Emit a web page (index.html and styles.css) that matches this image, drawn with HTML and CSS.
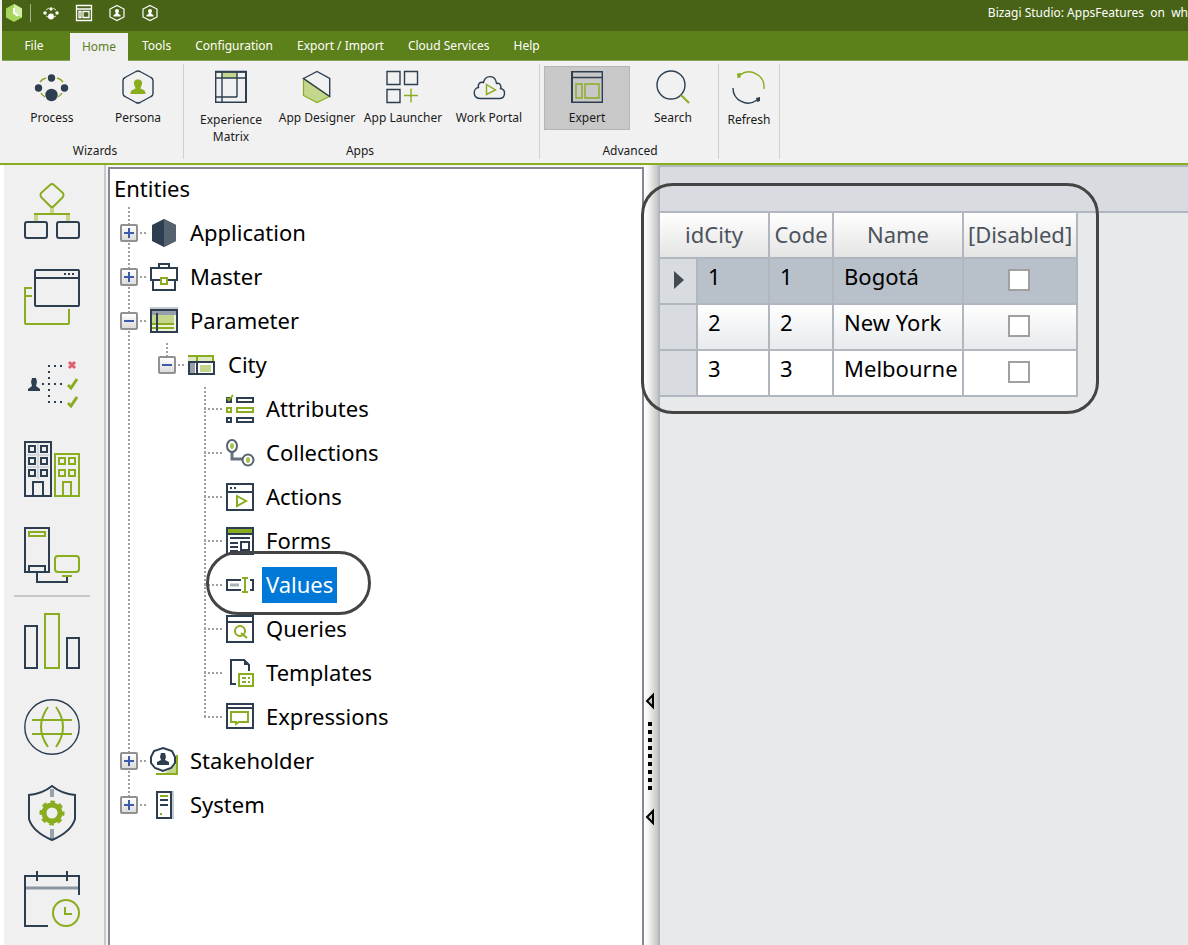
FILE: index.html
```html
<!DOCTYPE html>
<html lang="en">
<head>
<meta charset="utf-8">
<title>Bizagi Studio: AppsFeatures</title>
<link rel="stylesheet" href="styles.css">
</head>
<body>
<div class="app">
  <header class="titlebar">
    <div class="quick">
      <svg class="logo" viewBox="0 0 16 18"><path d="M8 0l8 4.500v9L8 18l-8-4.500v-9z" fill="#a5d65a"/><path d="M8 0l8 4.500v9L8 9z" fill="#d3edaa"/><path d="M8 4v5l4 3" fill="none" stroke="#fff" stroke-width="2"/></svg>
      <span class="quick-sep"></span>
      <button class="quick-btn" aria-label="Process"><svg viewBox="0 0 16 16" fill="#fff"><circle cx="8" cy="4" r="1.700"/><circle cx="2" cy="8" r="1.700"/><circle cx="14" cy="8" r="1.700"/><circle cx="8" cy="11.500" r="3"/><path d="M3 5l3-2M10 3l3 2M3 11l2 1M13 11l-2 1" stroke="#dde8c5"/></svg></button>
      <button class="quick-btn" aria-label="Expert"><svg viewBox="0 0 16 16" fill="none" stroke="#fff"><path d="M.5.500h15v15H.5zM.5 4h15M3 6.500h2v6H3zM7 6.500h6v6H7z" stroke-width="1.300"/></svg></button>
      <button class="quick-btn" aria-label="Persona"><svg viewBox="0 0 16 16"><path d="M8 .5l7 3.500v8l-7 3.500L1 12V4z" fill="none" stroke="#fff" stroke-width="1.200"/><circle cx="8" cy="6" r="2" fill="#fff"/><path d="M7 7h2l.5 2 2 1v1.500h-7V10l2-1z" fill="#fff"/></svg></button>
      <button class="quick-btn" aria-label="Stakeholder"><svg viewBox="0 0 16 16"><path d="M8 .5l7 3.500v8l-7 3.500L1 12V4z" fill="none" stroke="#fff" stroke-width="1.200"/><circle cx="8" cy="6" r="2" fill="#fff"/><path d="M7 7h2l.5 2 2 1v1.500h-7V10l2-1z" fill="#fff"/></svg></button>
    </div>
    <div class="title">Bizagi Studio: AppsFeatures&nbsp; on&nbsp; wh</div>
  </header>

  <nav class="menu">
    <button class="menu-item file">File</button>
    <button class="menu-item active">Home</button>
    <button class="menu-item">Tools</button>
    <button class="menu-item">Configuration</button>
    <button class="menu-item">Export / Import</button>
    <button class="menu-item">Cloud Services</button>
    <button class="menu-item">Help</button>
  </nav>

  <div class="ribbon">
    <section class="group wizards">
      <div class="group-items">
        <button class="tool"><svg class="tool-icon" viewBox="0 0 32 32"><path d="M4 11q2-3 6-4M21 7q4 1 6 4M5 22q1 2 4 4M26 22q-1 2-4 4" class="g"/><g fill="#2c3e50"><circle cx="15.500" cy="7" r="3.700"/><circle cx="2.500" cy="17" r="3.700"/><circle cx="28.500" cy="17" r="3.700"/><circle cx="15.500" cy="24" r="6.200"/></g></svg>Process</button>
        <button class="tool"><svg class="tool-icon" viewBox="0 0 32 32"><path d="M14 0.500q2-1 4 0l11 6q2 1 2 3v13q0 2-2 3l-11 6q-2 1-4 0l-11-6q-2-1-2-3v-13q0-2 2-3z" class="d"/><path d="M16 8.500c3 0 4.500 2 4 4.500-.3 2-1.500 3-1.500 4.500l4 2q1 1 1 3.500h-15q0-2.500 1-3.500l4-2c0-1.500-1.200-2.500-1.500-4.500-.5-2.500 1-4.500 4-4.500z" fill="#8aac1f"/></svg>Persona</button>
      </div>
      <h2 class="group-name">Wizards</h2>
    </section>
    <section class="group apps">
      <div class="group-items">
        <button class="tool low"><svg class="tool-icon" viewBox="0 0 32 32"><path d="M7 1h15v6H7z" fill="#c3d68b"/><path d="M.7.700h30.600v30.600H.7zM.7 7h30M7 .7v30.600M22 .7V26M.7 26H22" class="d"/><path d="M0 .7h32M31 0v32" class="d thick"/></svg>Experience Matrix</button>
        <button class="tool"><svg class="tool-icon" viewBox="0 0 32 32"><path d="M2.500 7.500l26 18L16 31.500l-13.500-7z" fill="#c3d68b" stroke="#8aac1f" stroke-width="1.200"/><path d="M2.500 7.500L16 .5l12.700 7v18z" class="d"/></svg>App Designer</button>
        <button class="tool"><svg class="tool-icon" viewBox="0 0 32 32"><path d="M0 .5h13v13H0zM17.500.500h13v13h-13zM0 18.500h13v13H0z" class="d"/><path d="M24 17.500v14M17 24.500h14" class="g"/></svg>App Launcher</button>
        <button class="tool"><svg class="tool-icon" viewBox="0 0 32 32"><path d="M7.500 27.500c-8 0-8-10-2-11-1-4 2-6 5-5 2-8 12-8 13 1 4-1 5 3 4 5 6 1 5 10-1 10z" class="d"/><path d="M13.500 13.500l9 5.500-9 4.500z" class="g"/></svg>Work Portal</button>
      </div>
      <h2 class="group-name">Apps</h2>
    </section>
    <section class="group advanced">
      <div class="group-items">
        <button class="tool selected"><svg class="tool-icon" viewBox="0 0 32 32"><path d="M.7.700h30.600v30.600H.7zM.7 6.500h30.600" class="d"/><path d="M1 0v32" class="d thick"/><path d="M5 13h6v14H5zM14 13h14v14H14z" class="g"/></svg>Expert</button>
        <button class="tool"><svg class="tool-icon" viewBox="0 0 32 32"><circle cx="14" cy="14" r="14" class="d"/><path d="M24 24l8 8" class="g thick"/></svg>Search</button>
      </div>
      <h2 class="group-name">Advanced</h2>
    </section>
    <section class="group refresh">
      <button class="tool low narrow"><svg class="tool-icon" viewBox="0 0 32 32"><path d="M7 4A15 15 0 0 1 31 17v1" class="g"/><path d="M0 17A15 15 0 0 0 24 29" class="d"/><path d="M4 2.500l4-.500-.5 4.500-3 .5z" fill="#8aac1f"/><path d="M23 27l4-1v4l-3 1z" fill="#2c3e50"/></svg>Refresh</button>
    </section>
  </div>

  <main class="workspace">
    <aside class="modules">
      <div class="module-set">
        <button class="module" aria-label="Processes"><svg viewBox="0 0 56 56"><path d="M28 24v7M12 31v7M44 31v7" stroke="#c3d68b" stroke-width="4"/><path d="M26 2l-9 8q-1 2 0 4l9 9q2 2 4 0l9-9q1-2 0-4l-9-8q-2-2-4 0zM10 31h36" class="g2"/><rect x="1" y="39" width="22" height="16" rx="2" class="d2"/><rect x="33" y="39" width="22" height="16" rx="2" class="d2"/></svg></button>
        <button class="module" aria-label="Forms"><svg viewBox="0 0 56 56"><rect x="11" y="1" width="44" height="36" rx="1" class="d2"/><path d="M11 9h44" class="d2"/><path d="M40 5h11" class="d2" stroke-dasharray="2 2"/><path d="M8 19H1v35q0 1 1 1h42q1 0 1-1V40M1 27h7" class="g2"/></svg></button>
        <button class="module" aria-label="Policies"><svg viewBox="0 0 56 56"><path d="M25 10v38" class="d2" stroke-dasharray="2 4"/><path d="M30 11h10M18 29h22M30 47h10" class="d2" stroke-dasharray="2 4"/><path d="M8 23h4l1 4-1 4 4 3v2H4v-2l4-3-1-4z" fill="#2c3e50"/><path d="M45 7l6 6M51 7l-6 6" stroke="#e0606e" stroke-width="3"/><path d="M44 30l3 3 6-9M44 48l3 3 6-9" class="g3"/></svg></button>
        <button class="module" aria-label="Organization"><svg viewBox="0 0 56 56"><path d="M14 2v36M3 14h22M3 26h22" stroke="#d3d7db" stroke-width="2"/><path d="M1 1h26v54H1zM5 5h6v6H5zM17 5h6v6h-6zM5 17h6v6H5zM17 17h6v6h-6zM5 29h6v6H5zM17 29h6v6h-6zM9 55V41h10v14" class="d2"/><path d="M31 13h24v42H31zM35 17h6v6h-6zM45 17h6v6h-6zM35 29h6v6h-6zM45 29h6v6h-6zM39 55V41h8v14" class="g2"/></svg></button>
        <button class="module" aria-label="Systems"><svg viewBox="0 0 56 56"><path d="M1 1h24v44H1zM5 45v-6h16v6M13 46v9h30v-5" class="d2"/><path d="M5 5h16v4H5zM38 49h10" class="g2"/><rect x="31" y="29" width="24" height="16" rx="3" class="g2"/></svg></button>
      </div>
      <hr class="module-sep">
      <div class="module-set">
        <button class="module" aria-label="Reports"><svg viewBox="0 0 56 56"><path d="M1 13h12v42H1zM43 25h12v30H43z" class="d2"/><path d="M21 1h14v54H21z" class="g2"/></svg></button>
        <button class="module" aria-label="Localization"><svg viewBox="0 0 56 56"><circle cx="28" cy="28" r="27.200" class="d"/><path d="M8 21h40M8 35h40M24 8q-14 20 0 40M32 8q14 20 0 40" class="g2"/></svg></button>
        <button class="module" aria-label="Security"><svg viewBox="0 0 56 56"><path d="M28 4v8M28 44v10" stroke="#9aa3ac" stroke-width="4"/><path d="M28 1q-10 8-23 9v24q4 13 23 21 19-8 23-21V10Q38 9 28 1z" class="d bold"/><circle cx="28" cy="28" r="8" fill="none" stroke="#8aac1f" stroke-width="5"/><circle cx="28" cy="28" r="11" fill="none" stroke="#8aac1f" stroke-width="3" stroke-dasharray="4.640 4" stroke-dashoffset="2"/></svg></button>
        <button class="module" aria-label="Calendar"><svg viewBox="0 0 56 56"><path d="M2 17h53" stroke="#8995a0" stroke-width="3"/><path d="M24 55H1V5h54v19M13 0v10M43 0v10" class="d2"/><circle cx="42" cy="42" r="13" class="g2"/><path d="M41 36v7h7" class="g2"/></svg></button>
      </div>
    </aside>

    <section class="tree-pane">
      <h1 class="tree-title">Entities</h1>
      <ul class="tree root">
        <li><div class="node"><button class="expander plus" aria-label="Expand Application"></button><span class="link"></span><svg class="node-icon" viewBox="0 0 28 28"><path d="M14 0l12 6v16l-12 6-12-6V6z" fill="#2c3e50"/><path d="M14 0l12 6v16l-12 6z" fill="#56636f"/></svg><span class="label">Application</span></div></li>
        <li><div class="node"><button class="expander plus" aria-label="Expand Master"></button><span class="link"></span><svg class="node-icon" viewBox="0 0 28 28"><path d="M9 4V1h10v3M10 17H1V5h26v12h-9M3 18v9h22v-9" class="d2"/><path d="M11 15h6v6h-6z" class="g2"/></svg><span class="label">Master</span></div></li>
        <li><div class="node"><button class="expander" aria-label="Collapse Parameter"></button><span class="link"></span><svg class="node-icon" viewBox="0 0 28 28"><path d="M0 0h28v2H0z" fill="#c5cad0"/><path d="M1 3h26v22H1z" fill="#eef3df" stroke="#2c3e50" stroke-width="2"/><path d="M2 4h24v4H2z" fill="#97a0aa"/><path d="M2 8h22v10H2z" fill="#c3d68b"/><path d="M2 17h22M2 21h22" class="g2"/><path d="M7 6v19" class="d2"/></svg><span class="label">Parameter</span></div>
          <ul class="tree">
            <li><div class="node"><button class="expander" aria-label="Collapse City"></button><span class="link"></span><svg class="node-icon" viewBox="0 0 28 28"><path d="M0 4h26v6H0z" fill="#dfe9c2"/><path d="M0 5h26M9 4v7M25 5v6" class="g2"/><path d="M1 11h25v12H1z" fill="#fff" stroke="#2c3e50" stroke-width="2"/><path d="M2 12h5v10H2z" fill="#97a0aa"/><path d="M12 14h11v7H12z" fill="#c3d68b"/><path d="M9 11v12" class="d2"/></svg><span class="label">City</span></div>
              <ul class="tree leaves">
                <li><div class="node"><span class="link"></span><svg class="node-icon" viewBox="0 0 28 28"><path d="M1 3h4v4H1zM11 3h16v4H11zM1 23h4v4H1zM11 23h16v4H11z" class="d2"/><path d="M1 13h4v4H1zM11 13h16v4H11zM1 3l2 2 4-5" class="g2"/></svg><span class="label">Attributes</span></div></li>
                <li><div class="node"><span class="link"></span><svg class="node-icon" viewBox="0 0 28 28"><path d="M6 13v7h10" fill="none" stroke="#66727f" stroke-width="3"/><ellipse cx="6" cy="7" rx="5" ry="6" fill="#fff" stroke="#56636f" stroke-width="2"/><circle cx="22" cy="21" r="5.500" fill="#fff" stroke="#56636f" stroke-width="2"/><ellipse cx="6" cy="7" rx="2" ry="3" fill="#a6c24f"/><ellipse cx="22" cy="21" rx="2" ry="3" fill="#a6c24f"/></svg><span class="label">Collections</span></div></li>
                <li><div class="node"><span class="link"></span><svg class="node-icon" viewBox="0 0 28 28"><path d="M1 1h26v26H1zM1 9h26" class="d2"/><path d="M4 5h6" class="d2" stroke-dasharray="2 2"/><path d="M11 13l9 5-9 5z" class="g2"/></svg><span class="label">Actions</span></div></li>
                <li><div class="node"><span class="link"></span><svg class="node-icon" viewBox="0 0 28 28"><path d="M2 2h24v5H2z" fill="#8aac1f"/><path d="M1 1h26v26H1zM1 7h26M4 11h20M4 16h8M4 20h8M4 24h8M15 15h8v8h-8z" class="d2"/></svg><span class="label">Forms</span></div></li>
                <li><div class="node"><span class="link"></span><svg class="node-icon" viewBox="0 0 28 28"><path d="M15 9H1v10h14M24 9h3v10h-3" class="d2"/><path d="M4 14h9" stroke="#a9b1b9" stroke-width="3"/><path d="M16 7h6M16 21h6M19 7v14" class="g2"/></svg><span class="label current">Values<span class="callout"></span></span></div></li>
                <li><div class="node"><span class="link"></span><svg class="node-icon" viewBox="0 0 28 28"><path d="M1 1h26v26H1zM1 7h26" class="d2"/><circle cx="14" cy="16" r="5" class="g2"/><path d="M15 18l6 5" class="g2"/></svg><span class="label">Queries</span></div></li>
                <li><div class="node"><span class="link"></span><svg class="node-icon" viewBox="0 0 28 28"><path d="M10 25H5V1h13l5 5v6" class="d2"/><path d="M18 0l6 6h-6z" fill="#2c3e50"/><path d="M13 15h14v12H13zM16 19h4M22 19h2M16 23h4M22 23h2" class="g2"/></svg><span class="label">Templates</span></div></li>
                <li><div class="node"><span class="link"></span><svg class="node-icon" viewBox="0 0 28 28"><path d="M1 1h26v24H1zM1 5h26" class="d2"/><path d="M5 9h17v10h-9l-3 2v-2H5z" class="g2"/></svg><span class="label">Expressions</span></div></li>
              </ul>
            </li>
          </ul>
        </li>
        <li><div class="node"><button class="expander plus" aria-label="Expand Stakeholder"></button><span class="link"></span><svg class="node-icon" viewBox="0 0 28 28"><path d="M27 8v19H6" class="g2"/><path d="M26 17v9H15z" fill="#c3d68b"/><path d="M13 1l9 3 3 6v6l-4 5-8 3-8-3-4-5v-6l3-6z" fill="#fff" stroke="#2c3e50" stroke-width="2"/><path d="M11 6h4l1 4-1 3 4 2v3H7v-3l4-2-1-3z" fill="#2c3e50"/></svg><span class="label">Stakeholder</span></div></li>
        <li><div class="node"><button class="expander plus" aria-label="Expand System"></button><span class="link"></span><svg class="node-icon" viewBox="0 0 28 28"><path d="M23 0v28" stroke="#c5cad0" stroke-width="2"/><path d="M7 1h14v26H7zM10 9h8M10 14h8" class="d2"/><path d="M10 5h8M10 23h2" class="g2"/></svg><span class="label">System</span></div></li>
      </ul>
    </section>

    <div class="splitter">
      <svg class="arrow" viewBox="0 0 8 14"><path d="M7 1v12L1 7z" fill="#ccc" stroke="#000" stroke-width="2"/></svg>
      <span class="grip"></span>
      <svg class="arrow" viewBox="0 0 8 14"><path d="M7 1v12L1 7z" fill="#ccc" stroke="#000" stroke-width="2"/></svg>
    </div>

    <section class="grid-pane">
      <div class="group-bar"></div>
      <div class="grid-wrap">
        <table class="grid">
          <colgroup><col class="c-mark"><col class="c-id"><col class="c-code"><col class="c-name"><col class="c-off"></colgroup>
          <thead><tr><th colspan="2">idCity</th><th>Code</th><th>Name</th><th>[Disabled]</th></tr></thead>
          <tbody>
            <tr class="picked"><td class="mark"><svg class="pointer" viewBox="0 0 10 18"><path d="M0 0v18l10-9z" fill="#434a54"/></svg></td><td>1</td><td>1</td><td>Bogotá</td><td class="check"><input type="checkbox" aria-label="Bogotá disabled"></td></tr>
            <tr class="shaded"><td class="mark"></td><td>2</td><td>2</td><td>New York</td><td class="check"><input type="checkbox" aria-label="New York disabled"></td></tr>
            <tr><td class="mark"></td><td>3</td><td>3</td><td>Melbourne</td><td class="check"><input type="checkbox" aria-label="Melbourne disabled"></td></tr>
          </tbody>
        </table>
        <span class="callout wide"></span>
      </div>
    </section>
  </main>
</div>
</body>
</html>
```
FILE: styles.css
```css
* { box-sizing: border-box; }
body { margin: 0; font-family: "Noto Sans", "Open Sans", sans-serif; font-size: 12px; color: #1a1a1a; background: #f0f0f0; }
button { font: inherit; color: inherit; background: none; border: 0; padding: 0; margin: 0; }
svg { display: block; overflow: visible; }
h1, h2 { margin: 0; font-weight: 400; }
.d, .d2, .g, .g2, .g3 { fill: none; }
.d, .d2 { stroke: #2c3e50; }
.g, .g2, .g3 { stroke: #8aac1f; }
.d, .g { stroke-width: 1.4; }
.d2, .g2, .thick, .bold { stroke-width: 2; }
.g3 { stroke-width: 3; }

.app { display: flex; flex-direction: column; height: 100vh; overflow: hidden; }

.titlebar { display: flex; justify-content: space-between; height: 31px; flex: none; margin-left: 2px; padding-left: 4px; background: #486316; color: #fff; overflow: hidden; }
.quick { display: flex; align-items: center; height: 26px; gap: 17px; }
.logo { width: 16px; height: 18px; }
.quick-sep { width: 1px; height: 18px; margin: 0 -5px 0 -9px; background: #a3b188; }
.quick-btn { width: 16px; height: 16px; }
.title { line-height: 26px; white-space: nowrap; }

.menu { display: flex; height: 30px; flex: none; margin-left: 2px; background: #5c801a; border-bottom: 1px solid #8aa35b; color: #fff; }
.menu-item { padding: 0 12px; line-height: 30px; white-space: nowrap; }
.menu-item.file { width: 64px; margin-right: 4px; }
.menu-item.active { width: 58px; height: 28px; line-height: 26px; margin: 2px 2px 0 0; padding: 0; background: #f0f0f0; color: #5c801a; }

.ribbon { display: flex; height: 104px; flex: none; padding: 3px 0 4px; background: #f1f1f1; border-bottom: 2px solid #8aac1f; }
.group { display: flex; flex-direction: column; justify-content: space-between; padding-top: 2px; border-right: 1px solid #d0d0d0; }
.wizards { padding-left: 9px; padding-right: 2px; }
.apps { padding-left: 4px; padding-right: 7px; }
.advanced { padding-left: 4px; padding-right: 2px; }
.group-items { display: flex; align-items: flex-start; }
.group-name { font-size: 12px; line-height: 16px; text-align: center; }
.tool { display: flex; flex-direction: column; align-items: center; gap: 6px; width: 86px; height: 64px; padding-top: 4px; border: 1px solid transparent; line-height: 17px; text-align: center; white-space: nowrap; }
.tool.low { height: 76px; gap: 8px; white-space: normal; }
.tool.narrow { width: 60px; }
.tool.selected { background: #c8c8c8; border-color: #b4b4b4; }
.tool-icon { width: 32px; height: 32px; flex: none; }

.workspace { display: flex; flex: 1; min-height: 0; background: #f4f4f4; }
.modules { width: 106px; flex: none; padding: 18px 14px 0 10px; border-left: 4px solid #fff; border-right: 2px solid #c8c8c8; background: #f0f0f0; }
.module-set { display: flex; flex-direction: column; align-items: center; gap: 30px; }
.module { width: 56px; height: 56px; flex: none; }
.module svg { width: 56px; height: 56px; }
.module-sep { height: 2px; margin: 12px 0 16px; border: 0; background: #c8c8c8; }

.tree-pane { flex: 0 1 536px; min-width: 300px; margin: 2px 0 0 2px; padding-left: 4px; border: 2px solid #838991; border-bottom: 0; background: #fff; font-size: 22px; color: #000; overflow: hidden; }
.tree-title { height: 38px; font-size: 22px; line-height: 38px; }
.tree { list-style: none; margin: 0; padding: 0 0 0 38px; }
.tree.root { padding: 4px 0 0 6px; background: repeating-linear-gradient(#a0a0a0 0 2px, transparent 2px 4px) 14px 0 / 2px 4px no-repeat; }
.tree li { background: repeating-linear-gradient(#a0a0a0 0 2px, transparent 2px 4px) 8px 0 / 2px 100% no-repeat; }
.tree li:last-child { background-size: 2px 22px; }
.node { display: flex; align-items: center; height: 44px; }
.expander { width: 18px; height: 18px; flex: none; border: 2px solid #919191; border-radius: 2px; background: linear-gradient(#3c5aa8, #3c5aa8) center / 10px 2px no-repeat, linear-gradient(#fff, #dcdcdc); }
.expander.plus { background: linear-gradient(#3c5aa8, #3c5aa8) center / 10px 2px no-repeat, linear-gradient(#3c5aa8, #3c5aa8) center / 2px 10px no-repeat, linear-gradient(#fff, #dcdcdc); }
.link { width: 8px; height: 2px; margin: 0 2px; background: repeating-linear-gradient(90deg, #a0a0a0 0 2px, transparent 2px 4px); }
.leaves .link { width: 18px; margin: 0 4px 0 8px; }
.node-icon { width: 28px; height: 28px; flex: none; margin-right: 8px; }
.label { height: 36px; padding: 0 4px; line-height: 34px; }
.label.current { position: relative; background: #0078d7; color: #fff; }
.callout { position: absolute; inset: -16px -34px -12px -56px; border: 3px solid #444; border-radius: 32px; pointer-events: none; }
.callout.wide { inset: -30px -21px -17px -19px; }

.splitter { display: flex; flex-direction: column; align-items: center; width: 14px; flex: none; padding: 0 2px 3px 0; background: linear-gradient(90deg, #fff, #f4f4f4 30%, #c4c4c4); }
.splitter::before { content: ""; flex: 9; }
.splitter::after { content: ""; flex: 2; }
.arrow { width: 8px; height: 14px; }
.grip { width: 4px; height: 68px; margin: 14px 0 20px; background: repeating-linear-gradient(#000 0 4px, transparent 4px 8px); }

.grid-pane { flex: 1; min-width: 0; border-left: 2px solid #b0b7bf; border-top: 2px solid #b0b7bf; background: #e8e9eb; }
.group-bar { height: 46px; background: #d8dbe0; border-bottom: 2px solid #b0b7bf; }
.grid-wrap { position: relative; width: max-content; }
.grid { width: 418px; table-layout: fixed; border-collapse: separate; border-spacing: 0; font-size: 22px; color: #000; }
.c-mark { width: 38px; }
.c-id { width: 72px; }
.c-code { width: 64px; }
.c-name { width: 130px; }
.c-off { width: 114px; }
.grid th, .grid td { height: 46px; padding: 0 0 10px 10px; border-right: 2px solid #b0b7bf; border-bottom: 2px solid #b0b7bf; line-height: 30px; text-align: left; font-weight: 400; white-space: nowrap; background: #fff; }
.grid th { padding: 0 0 2px; text-align: center; color: #4c535c; background: linear-gradient(#fff, #e4e4e4); }
.grid .picked td { background: #b8c0ca; }
.grid .shaded td { background: linear-gradient(#fff, #e8eaed); }
.grid td.mark, .grid .picked td.mark, .grid .shaded td.mark { padding: 0 0 2px 14px; background: #d8dbe0; }
.pointer { width: 10px; height: 18px; }
.grid td.check { padding: 0 2px 2px 0; text-align: center; }
.check input { display: block; width: 22px; height: 22px; margin: 0 auto; appearance: none; border: 2px solid #a0a0a0; background: #fff; }
```
